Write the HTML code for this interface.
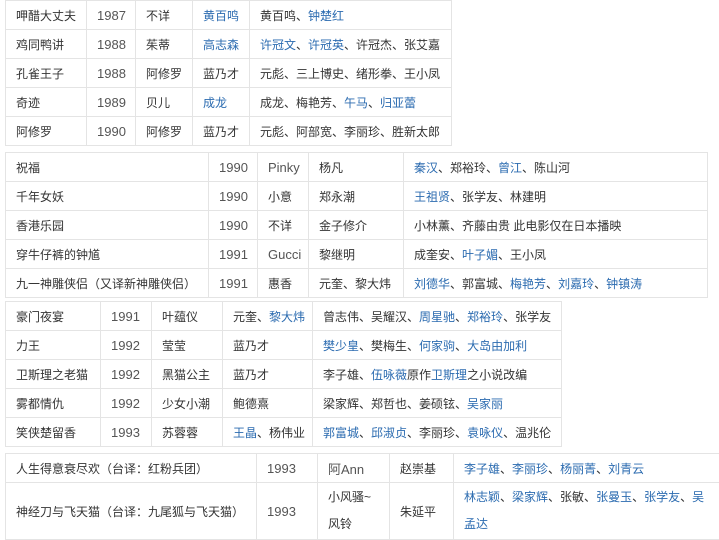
<!DOCTYPE html>
<html><head><meta charset="utf-8"><style>
body{margin:0;background:#fff;width:719px;height:525px;overflow:hidden;position:relative;font-family:"Liberation Sans","Noto Sans CJK SC",sans-serif;font-size:12px;color:#333}
table{position:absolute;border-collapse:collapse;table-layout:fixed}
td{border:1px solid #e4e4e4;padding:0 0 0 10px;height:28px;white-space:nowrap;overflow:hidden;vertical-align:middle}
td.y{color:#555;font-size:13px}
a{color:#2b6bb0;text-decoration:none}
</style></head><body>
<table style="left:5px;top:0;width:446px">
<colgroup><col style="width:81px"><col style="width:49px"><col style="width:57px"><col style="width:57px"><col style="width:202px"></colgroup>
<tr><td>呷醋大丈夫</td><td class="y">1987</td><td>不详</td><td><a>黄百鸣</a></td><td>黄百鸣、<a>钟楚红</a></td></tr>
<tr><td>鸡同鸭讲</td><td class="y">1988</td><td>茱蒂</td><td><a>高志森</a></td><td><a>许冠文</a>、<a>许冠英</a>、许冠杰、张艾嘉</td></tr>
<tr><td>孔雀王子</td><td class="y">1988</td><td>阿修罗</td><td>蓝乃才</td><td>元彪、三上博史、绪形拳、王小凤</td></tr>
<tr><td>奇迹</td><td class="y">1989</td><td>贝儿</td><td><a>成龙</a></td><td>成龙、梅艳芳、<a>午马</a>、<a>归亚蕾</a></td></tr>
<tr><td>阿修罗</td><td class="y">1990</td><td>阿修罗</td><td>蓝乃才</td><td>元彪、阿部宽、李丽珍、胜新太郎</td></tr>
</table>
<table style="left:5px;top:152px;width:702px">
<colgroup><col style="width:203px"><col style="width:49px"><col style="width:51px"><col style="width:95px"><col style="width:304px"></colgroup>
<tr><td>祝福</td><td class="y">1990</td><td class="y">Pinky</td><td>杨凡</td><td><a>秦汉</a>、郑裕玲、<a>曾江</a>、陈山河</td></tr>
<tr><td>千年女妖</td><td class="y">1990</td><td>小意</td><td>郑永潮</td><td><a>王祖贤</a>、张学友、林建明</td></tr>
<tr><td>香港乐园</td><td class="y">1990</td><td>不详</td><td>金子修介</td><td>小林薰、齐藤由贵 此电影仅在日本播映</td></tr>
<tr><td>穿牛仔裤的钟馗</td><td class="y">1991</td><td class="y">Gucci</td><td>黎继明</td><td>成奎安、<a>叶子媚</a>、王小凤</td></tr>
<tr><td>九一神雕侠侣（又译新神雕侠侣）</td><td class="y">1991</td><td>惠香</td><td>元奎、黎大炜</td><td><a>刘德华</a>、郭富城、<a>梅艳芳</a>、<a>刘嘉玲</a>、<a>钟镇涛</a></td></tr>
</table>
<table style="left:5px;top:301px;width:556px">
<colgroup><col style="width:95px"><col style="width:51px"><col style="width:71px"><col style="width:90px"><col style="width:249px"></colgroup>
<tr><td>豪门夜宴</td><td class="y">1991</td><td>叶蕴仪</td><td>元奎、<a>黎大炜</a></td><td>曾志伟、吴耀汉、<a>周星驰</a>、<a>郑裕玲</a>、张学友</td></tr>
<tr><td>力王</td><td class="y">1992</td><td>莹莹</td><td>蓝乃才</td><td><a>樊少皇</a>、樊梅生、<a>何家驹</a>、<a>大岛由加利</a></td></tr>
<tr><td>卫斯理之老猫</td><td class="y">1992</td><td>黑猫公主</td><td>蓝乃才</td><td>李子雄、<a>伍咏薇</a>原作<a>卫斯理</a>之小说改编</td></tr>
<tr><td>雾都情仇</td><td class="y">1992</td><td>少女小潮</td><td>鲍德熹</td><td>梁家辉、郑哲也、姜硕铉、<a>吴家丽</a></td></tr>
<tr><td>笑侠楚留香</td><td class="y">1993</td><td>苏蓉蓉</td><td><a>王晶</a>、杨伟业</td><td><a>郭富城</a>、<a>邱淑贞</a>、李丽珍、<a>袁咏仪</a>、温兆伦</td></tr>
</table>
<table style="left:5px;top:453px;width:730px">
<colgroup><col style="width:251px"><col style="width:61px"><col style="width:72px"><col style="width:64px"><col style="width:282px"></colgroup>
<tr><td>人生得意衰尽欢（台译：红粉兵团）</td><td class="y">1993</td><td class="y">阿Ann</td><td>赵崇基</td><td><a>李子雄</a>、<a>李丽珍</a>、<a>杨丽菁</a>、<a>刘青云</a></td></tr>
<tr><td style="height:56px">神经刀与飞天猫（台译：九尾狐与飞天猫）</td><td class="y">1993</td><td style="white-space:normal;line-height:27px">小风骚~<br>风铃</td><td>朱延平</td><td style="white-space:normal;line-height:27px"><a>林志颖</a>、<a>梁家辉</a>、张敏、<a>张曼玉</a>、<a>张学友</a>、<a>吴<br>孟达</a></td></tr>
</table>
</body></html>
